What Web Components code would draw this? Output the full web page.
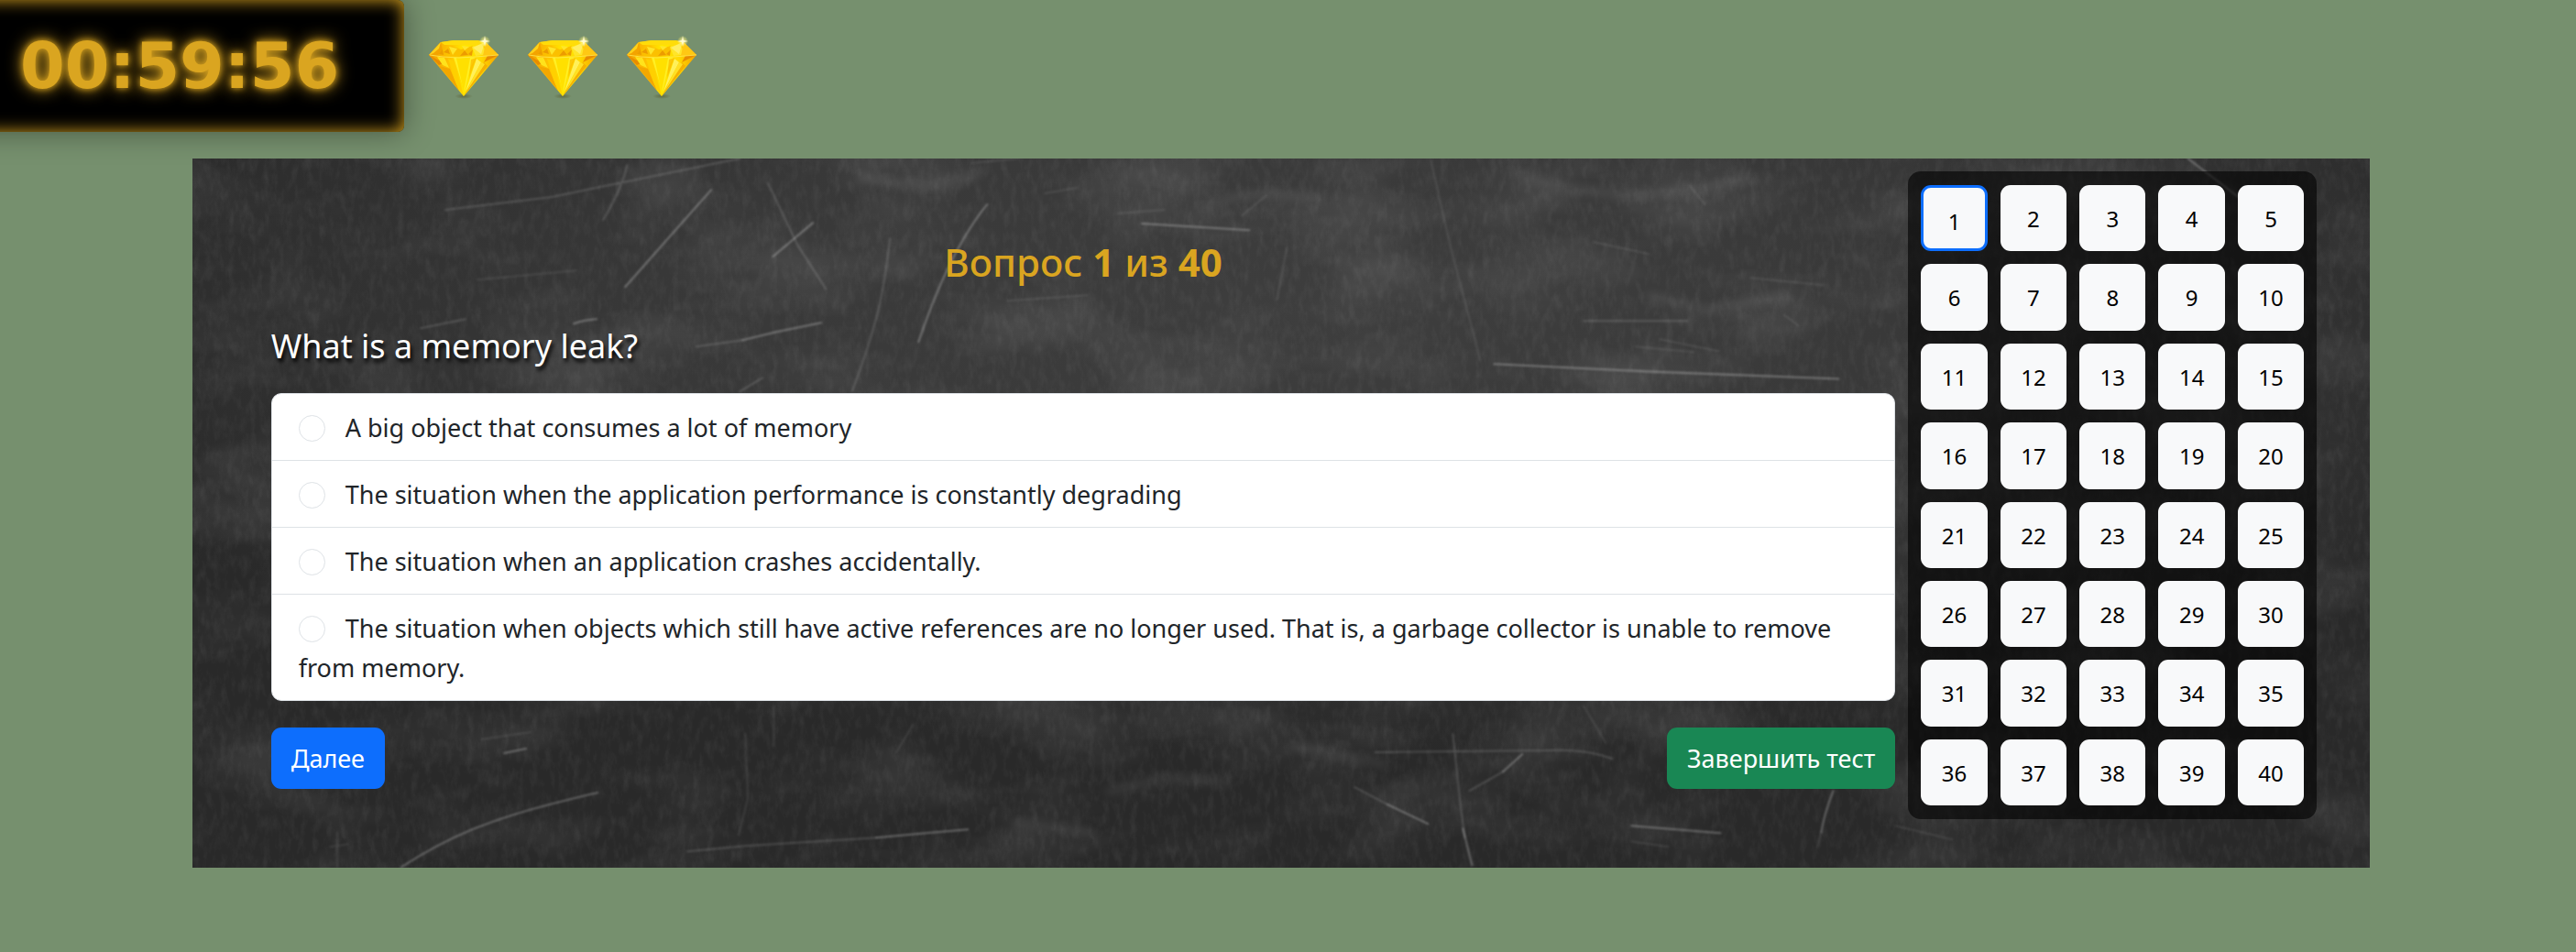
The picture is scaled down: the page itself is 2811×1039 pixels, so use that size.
<!DOCTYPE html>
<html lang="ru">
<head>
<meta charset="utf-8">
<meta name="viewport" content="width=device-width, initial-scale=1">
<title>Тест</title>
<style>
  body {
    margin: 0;
    padding-right: 15px;
    background: #76906e;
    color: #212529;
    font: 27px/43px "Noto Sans", "Open Sans", sans-serif;
  }
</style>
</head>
<body>
<quiz-header>
  <quiz-timer>00:59:56</quiz-timer>
  <gem-icon></gem-icon>
  <gem-icon></gem-icon>
  <gem-icon></gem-icon>
</quiz-header>

<quiz-board>
  <quiz-question current="1" total="40">
    <span slot="question">What is a memory leak?</span>
    <answer-list></answer-list>
    <action-button slot="actions" variant="primary">Далее</action-button>
    <action-button slot="actions" variant="success">Завершить тест</action-button>
  </quiz-question>
  <question-grid slot="nav" count="40" current="1"></question-grid>
</quiz-board>

<script>
  class Base extends HTMLElement {
    connectedCallback() {
      if (this.shadowRoot) return;
      this.attachShadow({ mode: 'open' }).innerHTML = this.render();
    }
  }

  customElements.define('quiz-header', class extends Base {
    render() {
      return `<style>
        :host { display: flex; align-items: flex-start; gap: 18px; }
      </style><slot></slot>`;
    }
  });

  customElements.define('quiz-timer', class extends Base {
    render() {
      return `<style>
        :host {
          display: flex; align-items: center; box-sizing: border-box;
          height: 144px; min-width: 481px; margin-left: -40px; padding: 0 62px;
          border-radius: 7px; background: #000; color: #daa520;
          font: 700 70px/1 "DejaVu Sans", sans-serif;
          text-shadow: 0 0 18px #daa520, 0 0 7px #daa520;
          box-shadow: inset 0 0 18px #daa520, 0 0 32px rgba(0, 0, 0, .4);
        }
      </style><time><slot></slot></time>`;
    }
  });

  customElements.define('gem-icon', class extends Base {
    render() {
      return `<style>
        :host { display: block; width: 90px; height: 90px; margin-top: 30px; }
        svg { display: block; width: 100%; height: 100%; }
      </style>
      <svg viewBox="0 0 90 90" role="img" aria-label="Жизнь">
        <defs>
          <linearGradient id="body" x1="0" x2="1" y1="0" y2="0">
            <stop offset="0" stop-color="#f09c00"/><stop offset=".3" stop-color="#ffc400"/>
            <stop offset=".5" stop-color="#ffe600"/><stop offset=".75" stop-color="#ffd900"/>
            <stop offset="1" stop-color="#f3a000"/>
          </linearGradient>
          <radialGradient id="glow"><stop offset="0" stop-color="#fff"/><stop offset=".25" stop-color="#fff8a0" stop-opacity=".8"/><stop offset="1" stop-color="#ffee55" stop-opacity="0"/></radialGradient>
          <radialGradient id="shade"><stop offset="0" stop-color="#4d4a1e" stop-opacity=".5"/><stop offset="1" stop-color="#4d4a1e" stop-opacity="0"/></radialGradient>
        </defs>
        <ellipse cx="47" cy="75" rx="10" ry="3" fill="url(#shade)"/>
        <path fill="url(#body)" d="M9 30 22 16 36 14H62L71 16 85 30 47 75Z"/>
        <path fill="#ffdc0a" d="M22 16 36 14H62L71 16 66 19 26 19Z"/>
        <path fill="#f3a300" d="M9 30 22 16 24 25 18 31Z"/>
        <path fill="#ffd21a" d="M22 16 9 30 14 28 20 23Z"/>
        <path fill="#fbc000" d="M24 25 34 20 44 24 57 20 55 31 42 32 28 31Z"/>
        <path fill="#ec9c00" d="M25 27 30 23 32 29ZM43 31 48 25 52 30ZM20 29 24 24 25 30ZM52 29 57 24 56 31Z"/>
        <path fill="#ffe52a" d="M31 21 40 23 35 30ZM45 20 53 21 48 25ZM56 21 66 18 74 29 60 31Z"/>
        <path fill="#fff38a" d="M57 22 70 16 66 29Z" opacity=".6"/>
        <path fill="#ffc813" d="M71 16 85 30 68 31Z"/>
        <path fill="#e88c00" d="M85 30 69 38 73 31ZM9 30 18 35 27 38 20 41Z"/>
        <path fill="#ffe31c" d="M18 32 26 33 31 44 24 41Z"/>
        <path fill="#f4a700" d="M20 42 32 45 42 69Z"/>
        <path fill="#ffd000" d="M30 34 37 37 47 75 39 62Z"/>
        <path fill="#ffef24" d="M36 33 60 33 54 44 48 70Z"/>
        <path fill="#ffe000" d="M39 33 54 33 47 70Z"/>
        <path fill="#fff05a" d="M61 34 66 38 49 70Z"/>
        <path fill="#f5b000" d="M69 38 73 42 47 75 60 52Z"/>
        <path fill="#ffdf25" d="M66 38 70 40 50 70Z"/>
        <path fill="#f9b800" d="M55 35 61 33 53 55Z" opacity=".7"/>
        <path fill="none" stroke="#ffea55" stroke-width=".8" d="M10 30 24 32 42 33 60 32 85 30"/>
        <circle cx="70" cy="15" r="6" fill="url(#glow)"/>
        <path fill="#fffbd0" d="M70 9 71 14 76 15 71 16 70 21 69 16 64 15 69 14Z"/>
      </svg>`;
    }
  });

  customElements.define('chalk-texture', class extends Base {
    render() {
      return `<style>
        :host { display: block; }
        svg { display: block; width: 100%; height: 100%; }
      </style>
      <svg viewBox="0 0 2376 773" preserveAspectRatio="none" aria-hidden="true">
        <defs>
          <radialGradient id="light" cx=".52" cy=".22" r=".62">
            <stop offset="0" stop-color="#3e3e3e"/><stop offset=".5" stop-color="#383838"/><stop offset="1" stop-color="#292929"/>
          </radialGradient>
          <filter id="grain" x="0" y="0" width="100%" height="100%">
            <feTurbulence type="fractalNoise" baseFrequency=".13 .06" numOctaves="4" seed="7"/>
            <feColorMatrix values="0 0 0 0 1  0 0 0 0 1  0 0 0 0 1  .7 .5 0 0 -.52"/>
          </filter>
          <filter id="smudge" x="0" y="0" width="100%" height="100%">
            <feTurbulence type="fractalNoise" baseFrequency=".006 .012" numOctaves="5" seed="21"/>
            <feColorMatrix values="0 0 0 0 1  0 0 0 0 1  0 0 0 0 1  1.400 0 0 0 -.62"/>
          </filter>
          <filter id="soft"><feGaussianBlur stdDeviation=".8"/></filter>
          <filter id="haze" x="-10%" y="-10%" width="120%" height="120%"><feGaussianBlur stdDeviation="5"/></filter>
        </defs>
        <rect width="2376" height="773" fill="url(#light)"/>
        <rect width="2376" height="773" filter="url(#smudge)" opacity=".14"/>
        <rect width="2376" height="773" filter="url(#grain)" opacity=".12"/>
        <g fill="none" stroke="#fff" stroke-width="2" stroke-linecap="round" filter="url(#soft)">
          <g opacity=".28">
            <path d="M566 34 472 140M600 198 637 189 686 179M867 50Q826 100 792 200M1420 224 1586 232 1796 240M228 772Q270 745 308 730T389 704 442 691M746 740 846 731M1304 704 1348 725M1386 730 1396 770M2177 0 2232 42"/>
            <path d="M416 180Q426 176 441 175M1451 649 1430 668M340 648 364 643M677 70 633 107M1036 71 1153 78M1790 689Q1780 715 1777 734M1570 727 1667 735"/>
          </g>
          <g opacity=".15">
            <path d="M761 87Q755 140 746 174T720 253M550 205 600 198M1518 177 1631 177M276 56 392 42 450 30 597 0M474 7Q470 30 448 67M628 27 660 94 691 142M249 185 298 175M597 254 622 239M603 749 746 740M540 755 603 749M1268 685 1304 704M1375 627 1384 710 1388 740M1430 668 1393 689M1290 647 1380 646 1478 645Q1520 643 1549 654"/>
          </g>
          <g opacity=".09">
            <path d="M311 132 419 122M1351 2 1371 90 1405 220M1529 91 1589 104M889 155 976 149M1736 170 1752 182M1574 205 1638 211M1601 197 1665 210M1634 30 1650 50M1172 40 1145 62M1194 97 1183 154M786 617 768 647M634 597V640M603 627 606 697 596 737M1518 597 1542 637M315 633 369 625M158 734V772M150 750 170 747M1773 750 1777 734M1570 744 1610 750M1858 727 1920 742M1010 60 1060 56M930 38 965 32M850 5 900 0M1700 130 1780 138"/>
          </g>
        </g>
        <g fill="none" stroke="#fff" stroke-width="8" stroke-linecap="round" filter="url(#haze)" opacity=".08">
          <path d="M730 20Q800 40 860 15M1100 55Q1150 30 1230 45M1440 15Q1560 60 1700 20M1590 150 1650 165 1740 150M1000 690Q1060 670 1130 680M900 725 980 735M1200 640 1300 660"/>
        </g>
      </svg>`;
    }
  });

  customElements.define('quiz-board', class extends Base {
    render() {
      return `<style>
        :host {
          display: flex; align-items: flex-start; gap: 14px; position: relative;
          box-sizing: border-box; width: 85%; margin: 29px auto 0;
          padding: 14px 58px 53px 86px; background: #333;
        }
        chalk-texture { position: absolute; inset: 0; }
        main { flex: 1; min-width: 0; position: relative; }
        aside { flex: none; width: 446px; position: relative; }
      </style>
      <chalk-texture></chalk-texture>
      <main><slot></slot></main>
      <aside><slot name="nav"></slot></aside>`;
    }
  });

  customElements.define('quiz-question', class extends Base {
    render() {
      return `<style>
        :host { display: block; padding-top: 73px; }
        h1 { margin: 0 0 44px; color: #daa520; font-size: 42px; line-height: 52px; font-weight: 500; text-align: center; }
        h2 { margin: 0 0 30px; color: #fff; font-size: 36px; line-height: 43px; font-weight: 400; text-shadow: 2px 4px 4px #000; }
        .actions { display: flex; justify-content: space-between; margin-top: 29px; }
      </style>
      <h1>Вопрос <b>${this.getAttribute('current')}</b> из <b>${this.getAttribute('total')}</b></h1>
      <h2><slot name="question"></slot></h2>
      <slot></slot>
      <div class="actions"><slot name="actions"></slot></div>`;
    }
  });

  customElements.define('answer-list', class extends Base {
    render() {
      const answers = [
        'A big object that consumes a lot of memory',
        'The situation when the application performance is constantly degrading',
        'The situation when an application crashes accidentally.',
        'The situation when objects which still have active references are no longer used. That is, a garbage collector is unable to remove from memory.'
      ];
      return `<style>
        :host { display: block; }
        ul { margin: 0; padding: 0; list-style: none; background: #fff; border: 1px solid #dee2e6; border-radius: 11px; overflow: hidden; }
        li { padding: 15px 29px 14px; }
        li + li { border-top: 1px solid #dee2e6; }
        label { display: block; }
        input {
          appearance: none; box-sizing: border-box; width: 29px; height: 29px;
          margin: 0 22px 0 0; vertical-align: -5px;
          border: 1px solid #dee2e6; border-radius: 50%; background: #fff;
        }
        input:checked { border: 9px solid #0d6efd; }
      </style>
      <ul>${answers.map((text, i) => `<li><label for="a${i}"><input type="radio" name="answer" id="a${i}">${text}</label></li>`).join('')}</ul>`;
    }
  });

  customElements.define('action-button', class extends Base {
    render() {
      return `<style>
        :host { display: block; --bg: #0d6efd; }
        :host([variant="success"]) { --bg: #198754; }
        button {
          display: block; margin: 0; padding: 12px 22px; border: 0; border-radius: 11px;
          background: var(--bg); color: #fff; font: inherit; cursor: pointer;
        }
      </style><button type="button"><slot></slot></button>`;
    }
  });

  customElements.define('question-grid', class extends Base {
    render() {
      const count = Number(this.getAttribute('count'));
      const current = Number(this.getAttribute('current'));
      const cells = Array.from({ length: count }, (_, i) => i + 1)
        .map(n => `<button type="button"${n === current ? ' aria-current="true"' : ''}><span>${n}</span></button>`).join('');
      return `<style>
        :host {
          display: grid; grid-template-columns: repeat(5, 1fr); gap: 14px;
          padding: 15px 14px; border-radius: 14px; background: rgba(0, 0, 0, .6);
        }
        button {
          display: flex; align-items: flex-start; justify-content: center; box-sizing: border-box;
          aspect-ratio: 1; min-width: 0; min-height: 0; margin: 0; padding: 0;
          border: 0; border-radius: 11px; background: #f8f9fa; color: #000;
          font: inherit; font-size: 24px; line-height: 74px; cursor: pointer;
        }
        button[aria-current] { border: 3px solid #0d6efd; }
      </style>${cells}`;
    }
  });
</script>
</body>
</html>
